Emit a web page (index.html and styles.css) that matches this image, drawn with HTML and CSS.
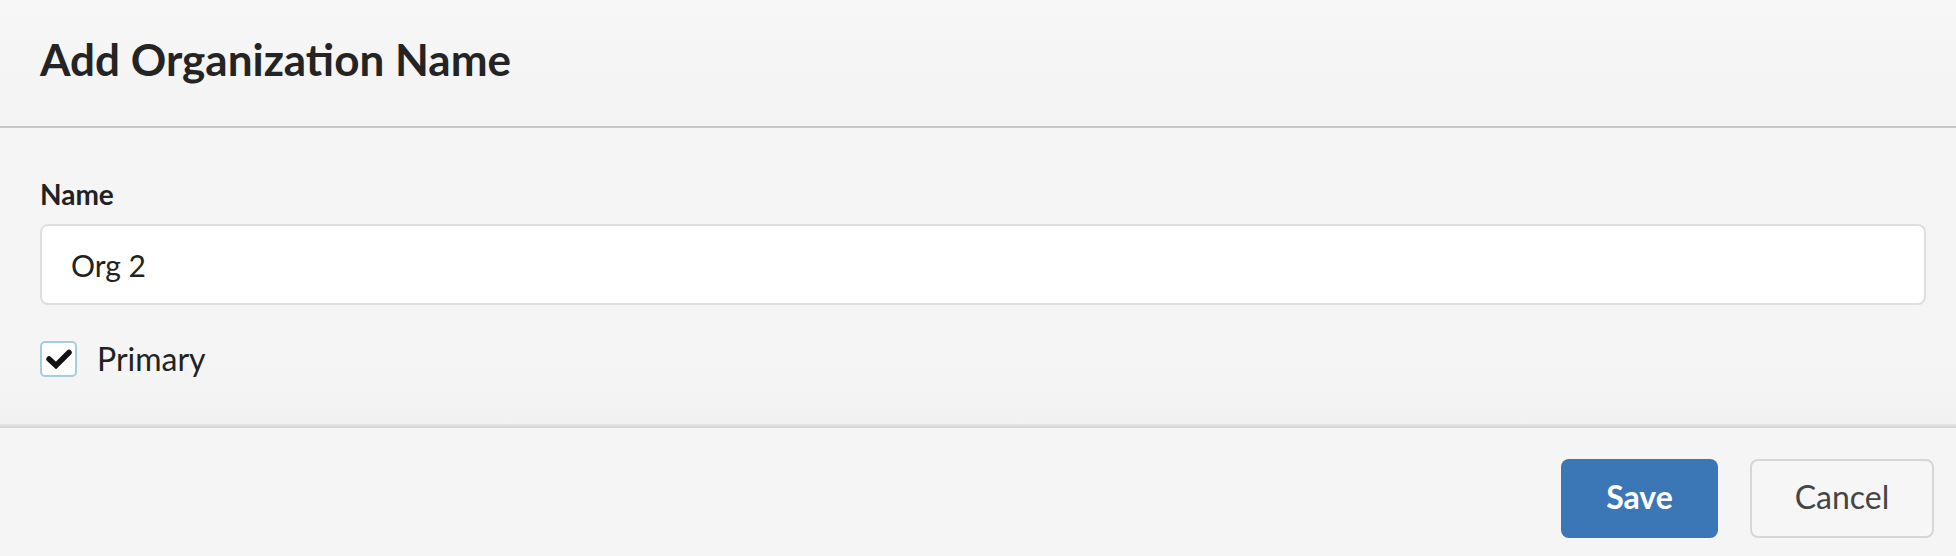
FILE: index.html
```html
<!DOCTYPE html>
<html lang="en">
<head>
    <meta charset="UTF-8">
    <meta name="viewport" content="width=device-width, initial-scale=1.0">
    <title>Add Organization Name</title>
    <link rel="stylesheet" href="styles.css">
</head>
<body>

<div class="modal">
    <div class="modal-header">
        <h1>Add Organization Name</h1>
    </div>

    <div class="modal-body">
        <label class="field-label" for="org-name">Name</label>
        <input type="text" id="org-name" class="field-input" value="Org 2">

        <label class="check">
            <span class="check-box">
                <svg width="26" height="20" viewBox="0 0 26 20">
                    <polyline points="3,10 10,16.5 23,3.5" fill="none" stroke="#111" stroke-width="5.5" stroke-linejoin="miter" stroke-linecap="round"/>
                </svg>
            </span>
            <span class="check-text">Primary</span>
        </label>
    </div>

    <div class="modal-footer">
        <button type="button" class="button button-save">Save</button>
        <button type="button" class="button button-cancel">Cancel</button>
    </div>
</div>

</body>
</html>
```

FILE: styles.css
```css
body {
    font-family: Lato, "Open Sans", Arial, sans-serif;
    margin: 0;
    background: #f5f5f5;
    color: #222;
}
.modal {
    width: 100%;
}
.modal-header {
    padding: 32px 40px 40px;
    background: linear-gradient(#f7f7f7, #f3f3f3);
    border-bottom: 2px solid #c6c6c6;
}
.modal-header h1 {
    margin: 0;
    font-size: 44px;
    line-height: 54px;
    font-weight: 700;
    color: #242424;
}
.modal-body {
    display: flex;
    flex-direction: column;
    align-items: flex-start;
    padding: 49px 30px 46px 40px;
    background: linear-gradient(#f5f5f5 80%, #f1f1f1);
}
.field-label {
    font-size: 28px;
    line-height: 34px;
    font-weight: 700;
    color: #222;
}
.field-input {
    box-sizing: border-box;
    width: 100%;
    height: 81px;
    margin-top: 13px;
    padding: 0 29px;
    border: 2px solid #dedede;
    border-radius: 8px;
    background: #fff;
    font-family: inherit;
    font-size: 30px;
    color: #222;
    outline: none;
}
.check {
    display: flex;
    align-items: center;
    gap: 20px;
    margin-top: 35px;
    cursor: pointer;
}
.check-box {
    box-sizing: border-box;
    width: 37px;
    height: 36px;
    border: 2px solid #a4cde0;
    border-radius: 5px;
    background: #fff;
    display: flex;
    align-items: center;
    justify-content: center;
}
.check-text {
    font-size: 32px;
    line-height: 38px;
    color: #222;
}
.modal-footer {
    display: flex;
    justify-content: flex-end;
    gap: 32px;
    padding: 33px 22px 16px;
    border-top: 2px solid #e3e3e3;
    box-shadow: inset 0 2px 0 #d8d8d8;
    background: #f5f5f5;
}
.button {
    box-sizing: border-box;
    height: 79px;
    border-radius: 8px;
    font-family: inherit;
    font-size: 32px;
    line-height: 38px;
    cursor: pointer;
    padding: 0 0 3px;
}
.button-save {
    width: 157px;
    border: none;
    background: #3b76b6;
    color: #fff;
    font-weight: 700;
}
.button-cancel {
    width: 184px;
    border: 2px solid #d6d6d6;
    background: #f6f6f6;
    color: #454545;
}
```
